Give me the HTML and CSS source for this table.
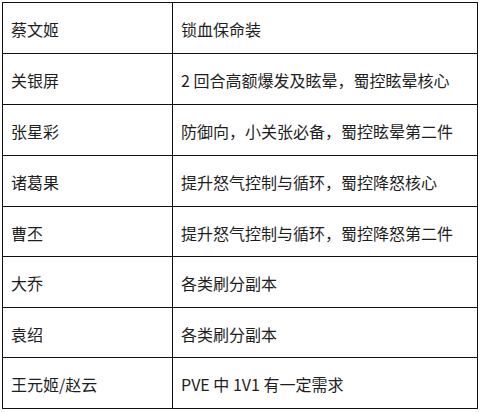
FILE: index.html
```html
<!DOCTYPE html>
<html lang="zh">
<head>
<meta charset="utf-8">
<link rel="stylesheet" href="styles.css">
</head>
<body>
<table class="grid">
  <tr class="r51"><td class="name">蔡文姬</td><td class="desc">锁血保命装</td></tr>
  <tr class="r51"><td class="name">关银屏</td><td class="desc">2 回合高额爆发及眩晕，蜀控眩晕核心</td></tr>
  <tr class="r51"><td class="name">张星彩</td><td class="desc">防御向，小关张必备，蜀控眩晕第二件</td></tr>
  <tr class="r51"><td class="name">诸葛果</td><td class="desc">提升怒气控制与循环，蜀控降怒核心</td></tr>
  <tr class="r50"><td class="name">曹丕</td><td class="desc">提升怒气控制与循环，蜀控降怒第二件</td></tr>
  <tr class="r51"><td class="name">大乔</td><td class="desc">各类刷分副本</td></tr>
  <tr class="r50"><td class="name">袁绍</td><td class="desc">各类刷分副本</td></tr>
  <tr class="r51"><td class="name">王元姬/赵云</td><td class="desc">PVE 中 1V1 有一定需求</td></tr>
</table>
</body>
</html>
```
FILE: styles.css
```css
html, body {
  margin: 0;
  padding: 0;
  background: #ffffff;
}
body {
  padding: 2px 0 0 2px;
  font-family: "Noto Sans CJK SC", "Noto Sans", sans-serif;
  font-size: 16px;
  color: #1e1e1e;
}
.grid {
  border-collapse: collapse;
  width: 475px;
  table-layout: fixed;
}
.grid td {
  border: 1px solid #111;
  padding: 2px 0 0 8px;
  vertical-align: middle;
  line-height: 20px;
  white-space: nowrap;
}
.grid .name {
  width: 170px;
}
.grid .desc {
  width: 305px;
}
.r51 td {
  height: 51px;
  box-sizing: border-box;
}
.r50 td {
  height: 50px;
  box-sizing: border-box;
}
```
